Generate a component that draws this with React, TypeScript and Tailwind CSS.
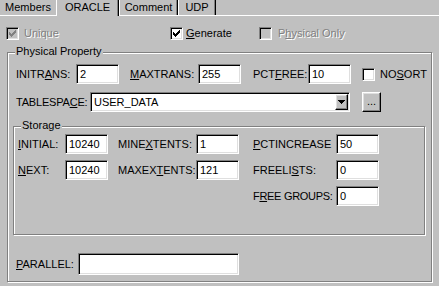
import React from 'react';

const sunken =
  'border border-t-[#808080] border-l-[#808080] border-b-white border-r-white shadow-[inset_1px_1px_0_#000,inset_-1px_-1px_0_#dfdfdf]';
const raised =
  'border border-t-white border-l-white border-b-black border-r-black shadow-[inset_-1px_-1px_0_#808080,inset_1px_1px_0_#dfdfdf]';
const disabledText = 'text-[#808080] [text-shadow:1px_1px_0_#fff]';

function Field({ className, value = '' }: { className: string; value?: string }) {
  return (
    <div className={`flex shrink-0 items-center bg-white pl-[3px] ${sunken} ${className}`}>
      {value}
    </div>
  );
}

function Label({ className = '', children }: { className?: string; children: React.ReactNode }) {
  return <span className={`shrink-0 whitespace-nowrap ${className}`}>{children}</span>;
}

function Check({ checked = false, disabled = false }: { checked?: boolean; disabled?: boolean }) {
  const fill = disabled ? '#808080' : '#000';
  // win95 tick, one column at a time
  const cols = [3, 4, 5, 4, 3, 2, 1];
  return (
    <div
      className={`flex h-[13px] w-[13px] shrink-0 items-center justify-center ${sunken} ${
        disabled ? 'bg-[#c0c0c0]' : 'bg-white'
      }`}
    >
      {checked && (
        <svg width="9" height="9" viewBox="0 0 9 9" shapeRendering="crispEdges">
          {cols.map((y, i) => (
            <rect key={i} x={i + 1} y={y} width="1" height="3" fill={fill} />
          ))}
        </svg>
      )}
    </div>
  );
}

function Group({
  title,
  className,
  children,
}: {
  title: string;
  className: string;
  children: React.ReactNode;
}) {
  return (
    <div className={`relative border border-[#808080] shadow-[inset_1px_1px_0_#fff,1px_1px_0_#fff] ${className}`}>
      <span className="absolute -top-[8px] left-[7px] bg-[#c0c0c0] px-[1px]">{title}</span>
      {children}
    </div>
  );
}

export default function App() {
  return (
    <div className="h-[286px] w-[439px] overflow-hidden bg-[#c0c0c0] font-['Liberation_Sans',Arial,sans-serif] text-[11px] leading-[13px] text-black select-none">
      {/* tab strip */}
      <div className="flex h-[15px] items-start">
        <div className="h-[15px] w-[56px] pt-[1px] text-center">Members</div>
        <div className="relative z-10 h-[16px] w-[63px] border-x border-l-white border-r-black bg-[#c0c0c0] pt-[1px] text-center shadow-[inset_-1px_0_0_#808080]">
          ORACLE
        </div>
        <div className="h-[15px] w-[59px] border-x border-l-white border-r-black pt-[1px] text-center shadow-[inset_-1px_0_0_#808080]">
          Comment
        </div>
        <div className="h-[15px] w-[38px] border-x border-l-white border-r-black pt-[1px] text-center shadow-[inset_-1px_0_0_#808080]">
          UDP
        </div>
      </div>

      <div className="h-[271px] border-t border-white">
        {/* flags */}
        <div className="mt-[11px] flex h-[13px] items-center">
          <div className="ml-[6px] flex w-[164px] items-center gap-[5px]">
            <Check checked disabled />
            <span className={disabledText}>Unique</span>
          </div>
          <div className="flex w-[89px] items-center gap-[3px]">
            <Check checked />
            <span>
              <u>G</u>enerate
            </span>
          </div>
          <div className="flex items-center gap-[6px]">
            <Check disabled />
            <span className={disabledText}>
              P<u>h</u>ysical Only
            </span>
          </div>
        </div>

        <Group title="Physical Property" className="ml-[7px] mt-[12px] h-[230px] w-[425px]">
          <div className="ml-[8px] mt-[11px] flex h-[20px] items-center">
            <Label className="w-[60px]">
              INITR<u>A</u>NS:
            </Label>
            <Field className="h-[20px] w-[43px]" value="2" />
            <Label className="ml-[11px] w-[68px]">
              <u>M</u>AXTRANS:
            </Label>
            <Field className="h-[20px] w-[43px]" value="255" />
            <Label className="ml-[12px] w-[55px]">
              PCT<u>F</u>REE:
            </Label>
            <Field className="h-[20px] w-[43px]" value="10" />
            <div className="ml-[11px] flex items-center gap-[5px]">
              <Check />
              <span>
                NO<u>S</u>ORT
              </span>
            </div>
          </div>

          <div className="ml-[8px] mt-[8px] flex h-[20px] items-center">
            <Label className="w-[74px] tracking-[-0.2px]">
              TABLESPA<u>C</u>E:
            </Label>
            <div className={`flex h-[20px] w-[260px] shrink-0 items-center bg-white ${sunken}`}>
              <span className="flex-1 pl-[3px]">USER_DATA</span>
              <div className={`mr-[1px] flex h-[16px] w-[13px] items-center justify-center bg-[#c0c0c0] ${raised}`}>
                <svg width="7" height="4" viewBox="0 0 7 4" shapeRendering="crispEdges">
                  <rect x="0" y="0" width="7" height="1" fill="#000" />
                  <rect x="1" y="1" width="5" height="1" fill="#000" />
                  <rect x="2" y="2" width="3" height="1" fill="#000" />
                  <rect x="3" y="3" width="1" height="1" fill="#000" />
                </svg>
              </div>
            </div>
            <div className={`ml-[12px] flex h-[20px] w-[19px] items-center justify-center pb-[2px] ${raised}`}>
              ...
            </div>
          </div>

          <Group title="Storage" className="ml-[5px] mt-[14px] h-[109px] w-[412px]">
            <div className="ml-[4px] mt-[7px] flex items-start">
              <div className="flex flex-col gap-[6px]">
                <div className="flex h-[20px] items-center">
                  <Label className="w-[47px]">
                    <u>I</u>NITIAL:
                  </Label>
                  <Field className="h-[20px] w-[43px]" value="10240" />
                </div>
                <div className="flex h-[20px] items-center">
                  <Label className="w-[47px]">
                    <u>N</u>EXT:
                  </Label>
                  <Field className="h-[20px] w-[43px]" value="10240" />
                </div>
              </div>

              <div className="ml-[10px] flex flex-col gap-[6px]">
                <div className="flex h-[20px] items-center">
                  <Label className="w-[78px]">
                    MINE<u>X</u>TENTS:
                  </Label>
                  <Field className="h-[20px] w-[43px]" value="1" />
                </div>
                <div className="flex h-[20px] items-center">
                  <Label className="w-[78px]">
                    MAXEX<u>T</u>ENTS:
                  </Label>
                  <Field className="h-[20px] w-[43px]" value="121" />
                </div>
              </div>

              <div className="ml-[14px] flex flex-col gap-[6px]">
                <div className="flex h-[20px] items-center">
                  <Label className="w-[83px]">
                    <u>P</u>CTINCREASE
                  </Label>
                  <Field className="h-[20px] w-[43px]" value="50" />
                </div>
                <div className="flex h-[20px] items-center">
                  <Label className="w-[83px]">
                    FREELI<u>S</u>TS:
                  </Label>
                  <Field className="h-[20px] w-[43px]" value="0" />
                </div>
                <div className="flex h-[20px] items-center">
                  <Label className="w-[83px] tracking-[-0.3px]">
                    F<u>R</u>EE GROUPS:
                  </Label>
                  <Field className="h-[20px] w-[43px]" value="0" />
                </div>
              </div>
            </div>
          </Group>

          <div className="ml-[8px] mt-[18px] flex h-[22px] items-center">
            <Label className="w-[62px]">
              <u>P</u>ARALLEL:
            </Label>
            <Field className="h-[22px] w-[161px]" />
          </div>
        </Group>
      </div>
    </div>
  );
}
